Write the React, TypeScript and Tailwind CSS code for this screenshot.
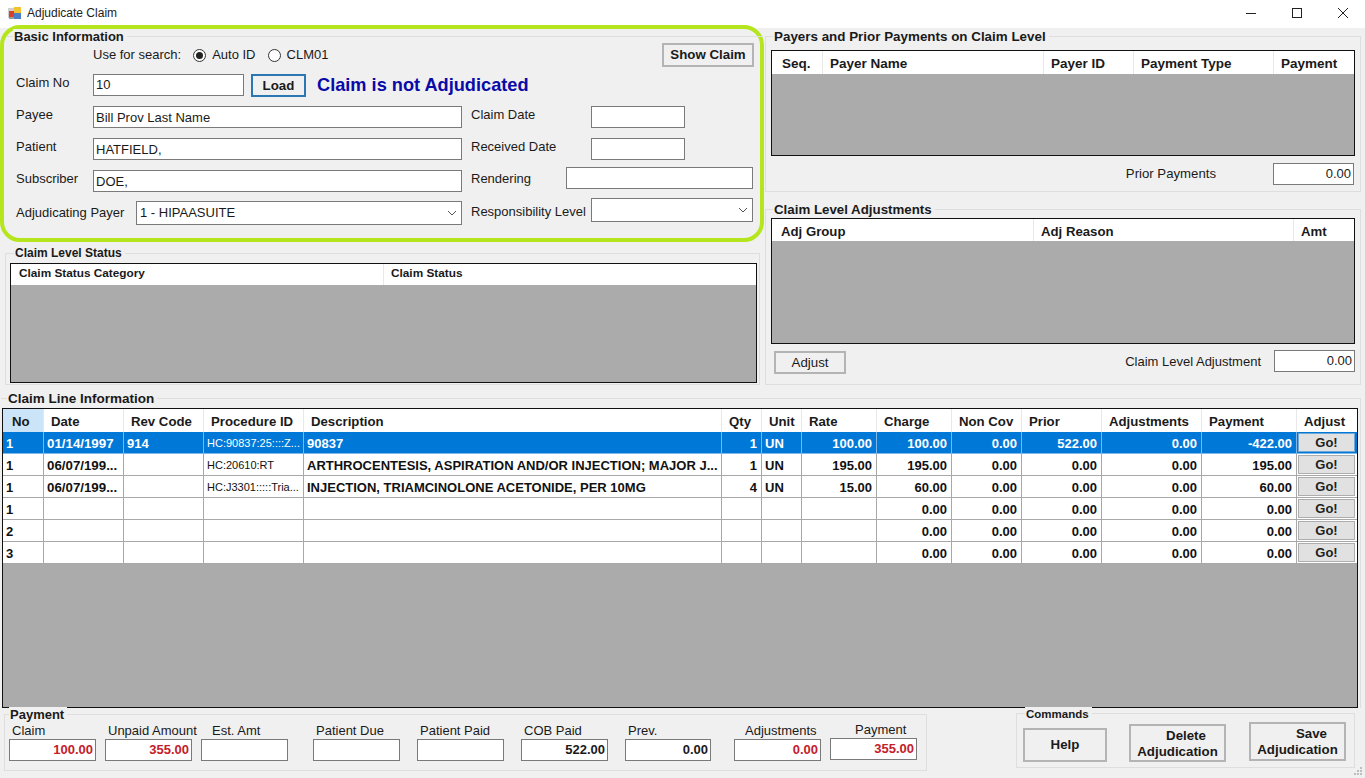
import React from "react";

const F = "font-['Liberation_Sans',Arial,sans-serif]";

function Box({ className = "", children, right, red, bold }: { className?: string; children?: React.ReactNode; right?: boolean; red?: boolean; bold?: boolean }) {
  return (
    <div className={`h-[22px] shrink-0 bg-white border border-[#7a7a7a] flex items-center overflow-hidden whitespace-nowrap text-[13px] px-[2px] ${right ? "justify-end" : ""} ${red ? "text-[#c4202a] font-bold" : "text-[#1a1a1a]"} ${bold ? "font-bold" : ""} ${className}`}>
      {children}
    </div>
  );
}

function Chevron() {
  return (
    <svg width="10" height="6" viewBox="0 0 10 6" className="shrink-0">
      <path d="M1 1l4 4 4-4" fill="none" stroke="#555" strokeWidth="1" />
    </svg>
  );
}

function Select({ className = "", children }: { className?: string; children?: React.ReactNode }) {
  return (
    <div className={`h-[24px] shrink-0 bg-white border border-[#7a7a7a] flex items-center justify-between pl-[3px] pr-[4px] text-[13px] text-[#1a1a1a] ${className}`}>
      <span>{children}</span>
      <Chevron />
    </div>
  );
}

function Btn({ className = "", children }: { className?: string; children?: React.ReactNode }) {
  return (
    <div className={`shrink-0 bg-[#f0f0f0] border-2 border-[#b4b4b4] flex items-center justify-center text-[13.3px] text-[#1a1a1a] leading-[16px] text-center ${className}`}>
      {children}
    </div>
  );
}

function Group({ title, className = "", titleClass = "text-[13px]", pos = "", children }: { title: string; className?: string; titleClass?: string; pos?: string; children?: React.ReactNode }) {
  return (
    <div className={`relative border border-[#dedede] ${className}`}>
      <div className={`absolute -top-[8px] bg-[#f0f0f0] pr-[3px] pl-[1px] leading-[15px] font-bold text-[#1a1a1a] whitespace-nowrap ${titleClass} ${pos}`}>{title}</div>
      {children}
    </div>
  );
}

function HeadGrid({ cols, titles, className = "", textClass = "", children }: { cols: string; titles: string[]; className?: string; textClass?: string; children?: React.ReactNode }) {
  return (
    <div className={`border border-[#111] bg-[#ababab] flex flex-col overflow-hidden ${className}`}>
      <div className={`grid bg-white shrink-0 ${cols}`}>
        {titles.map((t, i) => (
          <div key={t} className={`font-bold text-[#1a1a1a] whitespace-nowrap ${textClass} ${i ? "border-l border-[#e8e8e8]" : ""}`}>{t}</div>
        ))}
      </div>
      {children}
    </div>
  );
}

const mainCols = "grid-cols-[40px_80px_80px_100px_418px_40px_40px_75px_75px_70px_80px_100px_95px_61px]";

const mainHead: [string, string][] = [
  ["No", "pl-[9px] bg-[#cce4f7]"], ["Date", "pl-[7px]"], ["Rev Code", "pl-[7px]"], ["Procedure ID", "pl-[7px]"],
  ["Description", "pl-[7px]"], ["Qty", "pl-[7px]"], ["Unit", "pl-[7px]"], ["Rate", "pl-[7px]"], ["Charge", "pl-[7px]"],
  ["Non Cov", "pl-[7px]"], ["Prior", "pl-[7px]"], ["Adjustments", "pl-[7px]"], ["Payment", "pl-[7px]"], ["Adjust", "pl-[7px]"],
];

type Row = { no: string; date?: string; rev?: string; proc?: string; desc?: string; qty?: string; unit?: string; rate?: string; charge: string; non: string; prior: string; adj: string; pay: string; sel?: boolean };

const rows: Row[] = [
  { no: "1", date: "01/14/1997", rev: "914", proc: "HC:90837:25::::Z...", desc: "90837", qty: "1", unit: "UN", rate: "100.00", charge: "100.00", non: "0.00", prior: "522.00", adj: "0.00", pay: "-422.00", sel: true },
  { no: "1", date: "06/07/199...", proc: "HC:20610:RT", desc: "ARTHROCENTESIS, ASPIRATION AND/OR INJECTION; MAJOR J...", qty: "1", unit: "UN", rate: "195.00", charge: "195.00", non: "0.00", prior: "0.00", adj: "0.00", pay: "195.00" },
  { no: "1", date: "06/07/199...", proc: "HC:J3301:::::Tria...", desc: "INJECTION, TRIAMCINOLONE ACETONIDE, PER 10MG", qty: "4", unit: "UN", rate: "15.00", charge: "60.00", non: "0.00", prior: "0.00", adj: "0.00", pay: "60.00" },
  { no: "1", charge: "0.00", non: "0.00", prior: "0.00", adj: "0.00", pay: "0.00" },
  { no: "2", charge: "0.00", non: "0.00", prior: "0.00", adj: "0.00", pay: "0.00" },
  { no: "3", charge: "0.00", non: "0.00", prior: "0.00", adj: "0.00", pay: "0.00" },
];

function Cell({ children, right, sel, first, thin, num }: { children?: React.ReactNode; right?: boolean; sel?: boolean; first?: boolean; thin?: boolean; num?: boolean }) {
  return (
    <div className={`h-[22px] pt-[2px] flex items-center overflow-hidden whitespace-nowrap border-b ${first ? "" : "border-l"} ${sel ? "bg-[#0078d7] text-white border-[#7fb8e8]" : "bg-white text-[#111] border-[#a8a8a8]"} ${right ? "justify-end pr-[4px]" : "pl-[3px]"} ${thin ? "text-[11px] font-normal" : num ? "text-[13.3px] font-bold" : "text-[13px] font-bold"}`}>
      {children}
    </div>
  );
}

function PayField({ label, value, red, bold, labelClass = "", className = "w-[87px]" }: { label: string; value?: string; red?: boolean; bold?: boolean; labelClass?: string; className?: string }) {
  return (
    <div className={`shrink-0 flex flex-col ${className}`}>
      <div className={`h-[16px] text-[13px] leading-[16px] text-[#1a1a1a] whitespace-nowrap ${labelClass}`}>{label}</div>
      <Box right red={red} bold={bold} className="w-full">{value}</Box>
    </div>
  );
}

export default function App() {
  return (
    <div className={`${F} w-[1365px] h-[778px] overflow-hidden bg-[#f0f0f0] text-[#1a1a1a] relative flex flex-col`}>
      {/* title bar */}
      <div className="h-[28px] shrink-0 bg-white flex items-center pl-[8px] pb-[2px]">
        <svg width="13" height="14" viewBox="0 0 13 14" className="shrink-0">
          <rect x="0" y="2" width="7" height="10" fill="#cfcfcf" />
          <rect x="1" y="5" width="6" height="6" fill="#d8402a" />
          <rect x="6" y="1" width="7" height="6" fill="#f2c230" />
          <rect x="6" y="7" width="7" height="6" fill="#4a7fc8" />
          <rect x="1" y="11" width="5" height="2" fill="#9a9a9a" />
        </svg>
        <span className="ml-[6px] text-[12px] text-[#222]">Adjudicate Claim</span>
        <div className="ml-auto flex items-center">
          <div className="w-[46px] h-[24px] pl-[2px] flex items-center justify-center">
            <svg width="12" height="12" viewBox="0 0 12 12"><path d="M1 6.5h10" stroke="#222" strokeWidth="1" /></svg>
          </div>
          <div className="w-[46px] h-[24px] pl-[2px] flex items-center justify-center">
            <svg width="12" height="12" viewBox="0 0 12 12"><rect x="1.5" y="1.5" width="9" height="9" fill="none" stroke="#222" strokeWidth="1" /></svg>
          </div>
          <div className="w-[46px] h-[24px] pl-[2px] flex items-center justify-center">
            <svg width="12" height="12" viewBox="0 0 12 12"><path d="M1 1l10 10M11 1L1 11" stroke="#222" strokeWidth="1" /></svg>
          </div>
        </div>
      </div>

      {/* top area */}
      <div className="flex shrink-0 h-[360px]">
        {/* left column */}
        <div className="w-[764px] shrink-0 flex flex-col">
          <div className="relative -mt-[3px] h-[217px] w-[764px] shrink-0 border-[4px] border-[#b5e61d] rounded-[20px] bg-[#f0f0f0]">
            <Group title="Basic Information" className="absolute left-[3px] right-[2px] top-[7px] bottom-[2px] border-b-0 border-l-0 border-r-0" titleClass="text-[13px]" pos="left-[6px]" />
            <div className="relative pt-[13px] pl-[12px] pr-[5px] text-[13px]">
              {/* search row */}
              <div className="flex items-start h-[24px]">
                <div className="ml-[77px] mt-[4px] flex items-center h-[16px] whitespace-nowrap">
                  <span>Use for search:</span>
                  <span className="ml-[12px] w-[13px] h-[13px] rounded-full border border-[#333] bg-white flex items-center justify-center">
                    <span className="w-[7px] h-[7px] rounded-full bg-[#222]" />
                  </span>
                  <span className="ml-[6px]">Auto ID</span>
                  <span className="ml-[12px] w-[13px] h-[13px] rounded-full border border-[#333] bg-white" />
                  <span className="ml-[6px]">CLM01</span>
                </div>
                <Btn className="ml-auto mr-[1px] w-[92px] h-[24px] font-bold">Show Claim</Btn>
              </div>
              {/* claim row */}
              <div className="mt-[7px] flex items-start h-[23px]">
                <span className="w-[77px] shrink-0 leading-[16px] mt-[1px]">Claim No</span>
                <Box className="w-[151px]">10</Box>
                <div className="ml-[7px] w-[55px] h-[23px] shrink-0 border-2 border-[#2a77b3] bg-[#f0f0f0] flex items-center justify-center font-bold text-[13.3px] text-[#1a1a1a]">Load</div>
                <span className="ml-[11px] text-[18.2px] leading-[22px] font-bold text-[#0a0aa8] whitespace-nowrap">Claim is not Adjudicated</span>
              </div>
              {/* field columns */}
              <div className="mt-[9px] flex">
                <div className="w-[446px] shrink-0 flex flex-col gap-[10px]">
                  {[["Payee", "Bill Prov Last Name"], ["Patient", "HATFIELD,"], ["Subscriber", "DOE,"]].map(([l, v]) => (
                    <div key={l} className="flex items-start">
                      <span className="w-[77px] shrink-0 leading-[16px] mt-[1px]">{l}</span>
                      <Box className="w-[369px] pt-[2px]">{v}</Box>
                    </div>
                  ))}
                  <div className="flex items-center -mt-[1px]">
                    <span className="w-[120px] shrink-0 whitespace-nowrap">Adjudicating Payer</span>
                    <Select className="w-[326px]">1 - HIPAASUITE</Select>
                  </div>
                </div>
                <div className="flex-1 pl-[9px] flex flex-col">
                  <div className="flex items-start">
                    <span className="w-[120px] shrink-0 leading-[16px] mt-[1px]">Claim Date</span>
                    <Box className="w-[94px]" />
                  </div>
                  <div className="flex items-start mt-[10px]">
                    <span className="w-[120px] shrink-0 leading-[16px] mt-[1px]">Received Date</span>
                    <Box className="w-[94px]" />
                  </div>
                  <div className="flex items-center mt-[7px]">
                    <span className="w-[95px] shrink-0 pt-[2px]">Rendering</span>
                    <Box className="w-[187px]" />
                  </div>
                  <div className="flex items-center mt-[9px]">
                    <span className="w-[120px] shrink-0 whitespace-nowrap pt-[4px]">Responsibility Level</span>
                    <Select className="w-[162px]" />
                  </div>
                </div>
              </div>
            </div>
          </div>
          <Group title="Claim Level Status" className="ml-[5px] mt-[11px] w-[755px] h-[132px] pt-[9px] pl-[4px] pr-[1px]" titleClass="text-[12px]" pos="left-[8px]">
            <HeadGrid
              cols="grid-cols-[372px_1fr]"
              titles={["Claim Status Category", "Claim Status"]}
              textClass="h-[21px] leading-[18px] pl-[7px] first:pl-[8px] text-[11.8px]"
              className="h-[120px] w-[747px]"
            />
          </Group>
        </div>

        {/* right column */}
        <div className="flex-1 pl-[1px] flex flex-col">
          <Group title="Payers and Prior Payments on Claim Level" className="mt-[8px] w-[596px] h-[156px] pt-[13px] pl-[5px]" titleClass="text-[13.4px]" pos="left-[7px]">
            <HeadGrid
              cols="grid-cols-[50px_221px_90px_140px_1fr]"
              titles={["Seq.", "Payer Name", "Payer ID", "Payment Type", "Payment"]}
              textClass="h-[23px] leading-[25px] pl-[7px] first:pl-[10px] text-[13.5px]"
              className="w-[584px] h-[106px]"
            />
            <div className="mt-[7px] flex items-center justify-end pr-[6px]">
              <span className="mr-[57px] text-[13.2px]">Prior Payments</span>
              <Box right className="w-[81px]">0.00</Box>
            </div>
          </Group>
          <Group title="Claim Level Adjustments" className="mt-[17px] w-[596px] h-[176px] pt-[8px] pl-[5px]" titleClass="text-[13.3px]" pos="left-[7px]">
            <HeadGrid
              cols="grid-cols-[261px_260px_1fr]"
              titles={["Adj Group", "Adj Reason", "Amt"]}
              textClass="h-[22px] leading-[25px] pl-[7px] first:pl-[9px] text-[13.2px]"
              className="w-[584px] h-[126px]"
            />
            <div className="mt-[7px] flex items-start pr-[5px]">
              <Btn className="ml-[3px] w-[72px] h-[23px]">Adjust</Btn>
              <span className="ml-auto mr-[13px] text-[13px] leading-[22px]">Claim Level Adjustment</span>
              <Box right className="w-[81px] -mt-[1px]">0.00</Box>
            </div>
          </Group>
        </div>
      </div>

      {/* claim lines */}
      <Group title="Claim Line Information" className="mt-[10px] ml-[1px] w-[1360px] h-[310px] shrink-0 border-b-0 border-l-0 pt-[9px] pl-[1px]" titleClass="text-[13.5px]" pos="left-[6px]">
        <div className="w-[1356px] h-[300px] border border-[#111] bg-[#ababab] overflow-hidden">
          <div className={`grid bg-white ${mainCols}`}>
            {mainHead.map(([t, c], i) => (
              <div key={t} className={`h-[23px] leading-[26px] text-[13.2px] font-bold text-[#1a1a1a] whitespace-nowrap ${i ? "border-l border-[#e8e8e8]" : ""} ${c}`}>{t}</div>
            ))}
          </div>
          {rows.map((r, i) => (
            <div key={i} className={`grid ${mainCols}`}>
              <Cell sel={r.sel} first>{r.no}</Cell>
              <Cell sel={r.sel} num>{r.date}</Cell>
              <Cell sel={r.sel}>{r.rev}</Cell>
              <Cell sel={r.sel} thin>{r.proc}</Cell>
              <Cell sel={r.sel}>{r.desc}</Cell>
              <Cell sel={r.sel} right>{r.qty}</Cell>
              <Cell sel={r.sel}>{r.unit}</Cell>
              <Cell sel={r.sel} right>{r.rate}</Cell>
              <Cell sel={r.sel} right>{r.charge}</Cell>
              <Cell sel={r.sel} right>{r.non}</Cell>
              <Cell sel={r.sel} right>{r.prior}</Cell>
              <Cell sel={r.sel} right>{r.adj}</Cell>
              <Cell sel={r.sel} right>{r.pay}</Cell>
              <div className={`h-[22px] border-b border-l pl-[1px] flex items-center justify-start ${r.sel ? "bg-[#0078d7] border-[#7fb8e8]" : "bg-white border-[#a8a8a8]"}`}>
                <div className={`w-[57px] h-[19px] bg-[#e1e1e1] border flex items-center justify-center text-[13px] font-bold text-[#222] ${r.sel ? "border-[#6fa8d8]" : "border-[#adadad]"}`}>Go!</div>
              </div>
            </div>
          ))}
        </div>
      </Group>

      {/* bottom */}
      <div className="flex shrink-0 mt-[6px]">
        <Group title="Payment" className="ml-[4px] w-[923px] h-[57px] pt-[8px] pl-[4px] flex items-start" titleClass="text-[13px]" pos="left-[4px]">
          <PayField label="Claim" value="100.00" red labelClass="pl-[3px]" />
          <PayField label="Unpaid Amount" value="355.00" red className="w-[87px] ml-[9px]" labelClass="pl-[3px]" />
          <PayField label="Est. Amt" className="w-[87px] ml-[9px]" labelClass="pl-[11px] text-[13.5px]" />
          <PayField label="Patient Due" className="w-[87px] ml-[25px]" labelClass="pl-[3px]" />
          <PayField label="Patient Paid" className="w-[87px] ml-[17px]" labelClass="pl-[3px]" />
          <PayField label="COB Paid" value="522.00" bold className="w-[87px] ml-[17px]" labelClass="pl-[3px]" />
          <PayField label="Prev." value="0.00" bold className="w-[86px] ml-[17px]" labelClass="pl-[3px]" />
          <PayField label="Adjustments" value="0.00" red className="w-[87px] ml-[23px]" labelClass="pl-[11px]" />
          <PayField label="Payment" value="355.00" red className="w-[87px] ml-[9px]" labelClass="pl-[25px] -mt-[1px] pb-[1px]" />
        </Group>
        <Group title="Commands" className="ml-[89px] -mt-[1px] w-[339px] h-[55px] flex items-end pb-[5px] pl-[6px]" titleClass="text-[11.5px]" pos="left-[8px] top-[-7px]">
          <Btn className="w-[84px] h-[34px] font-bold">Help</Btn>
          <Btn className="ml-[22px] w-[97px] h-[38px] pt-[2px] font-bold">
            <span>
              <span className="pl-[17px]">Delete</span>
              <br />
              Adjudication
            </span>
          </Btn>
          <Btn className="ml-[23px] w-[97px] h-[39px] mb-[1px] font-bold">
            <span>
              <span className="pl-[28px]">Save</span>
              <br />
              Adjudication
            </span>
          </Btn>
        </Group>
      </div>
      <svg width="10" height="10" viewBox="0 0 10 10" className="absolute right-[2px] bottom-[2px]">
        <g fill="#bdbdbd">
          <rect x="7" y="1" width="2" height="2" /><rect x="4" y="4" width="2" height="2" /><rect x="7" y="4" width="2" height="2" />
          <rect x="1" y="7" width="2" height="2" /><rect x="4" y="7" width="2" height="2" /><rect x="7" y="7" width="2" height="2" />
        </g>
      </svg>
    </div>
  );
}
